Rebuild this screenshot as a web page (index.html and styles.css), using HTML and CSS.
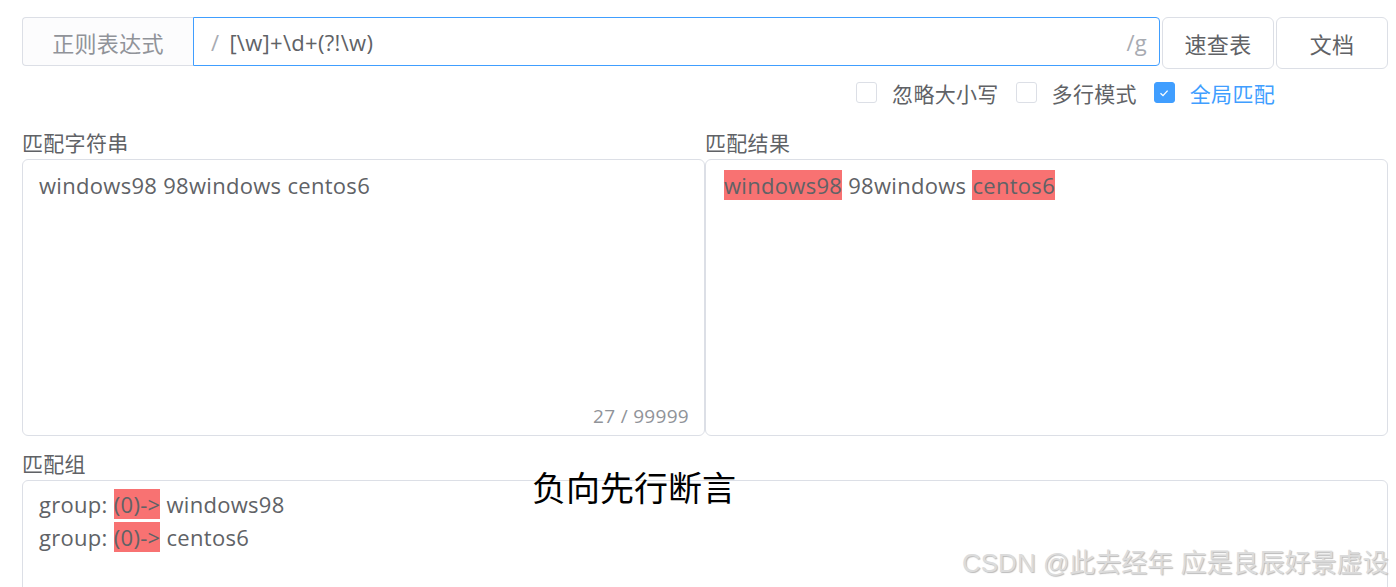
FILE: index.html
```html
<!doctype html>
<html lang="zh">
    <head>
        <meta charset="utf-8">
        <link rel="stylesheet" href="styles.css">
    </head>
    <body>
        <div class="Pagina">
            <!-- Fila de la expresión regular -->
            <div class="Fila">
                <div class="Prefijo">正则表达式</div>
                <div class="Entrada">
                    <span class="Barra">/</span>
                    <span class="Expresion">[\w]+\d+(?!\w)</span>
                    <span class="Flags">/g</span>
                </div>
                <button class="Boton">速查表</button>
                <button class="Boton">文档</button>
            </div>

            <!-- Opciones -->
            <div class="Opciones">
                <label class="Check"><span class="Caja"></span>忽略大小写</label>
                <label class="Check"><span class="Caja"></span>多行模式</label>
                <label class="Check Activo"><span class="Caja">
                    <svg width="12" height="12" viewBox="0 0 12 12"><path d="M2.5 6.2 L5 8.6 L9.6 3.6" fill="none" stroke="#fff" stroke-width="1.3"/></svg>
                </span>全局匹配</label>
            </div>

            <!-- Texto y resultado -->
            <div class="Paneles">
                <div class="Panel">
                    <div class="Titulo">匹配字符串</div>
                    <div class="Area">
                        <div>windows98 98windows centos6</div>
                        <span class="Contador">27 / 99999</span>
                    </div>
                </div>
                <div class="Panel">
                    <div class="Titulo">匹配结果</div>
                    <div class="Area Resultado">
                        <div><mark>windows98</mark> 98windows <mark>centos6</mark></div>
                    </div>
                </div>
            </div>

            <div class="Titulo Separado">匹配组</div>
            <div class="Area Grupos">
                <div>group: <mark>(0)-&gt;</mark> windows98</div>
                <div>group: <mark>(0)-&gt;</mark> centos6</div>
            </div>
        </div>

        <!-- Texto superpuesto -->
        <div class="Rotulo">负向先行断言</div>
        <div class="Marca">CSDN @此去经年 应是良辰好景虚设</div>
    </body>
</html>
```

FILE: styles.css
```css
body {
    margin:0;
    background:#FFF;
    color:#606266;
    font-family:"Open Sans", "Noto Sans CJK SC", sans-serif;
    font-size:22px;
    letter-spacing:0.3px;
    overflow:hidden;
}
.Pagina { padding:17px 8px 0 22px; }

/* Fila superior */
.Fila {
    display:flex;
    align-items:flex-start;
    gap:2px;
}
.Prefijo {
    width:170px;
    height:47px;
    border:1px solid #DCDFE6;
    border-right:none;
    border-radius:4px 0 0 4px;
    background:#FCFCFD;
    display:flex;
    align-items:center;
    justify-content:center;
    color:#909399;
    margin-right:-2px;
}
.Entrada {
    flex:1;
    height:47px;
    border:1px solid #409EFF;
    border-radius:0 4px 4px 0;
    display:flex;
    align-items:center;
    padding:0 12px 0 17px;
}
.Barra { color:#A8ABB2; margin-right:10px; }
.Expresion { flex:1; }
.Flags { color:#A8ABB2; }
.Boton {
    width:112px;
    height:52px;
    border:1px solid #DCDFE6;
    border-radius:6px;
    background:#FFF;
    color:#606266;
    font-family:inherit;
    font-size:22px;
    letter-spacing:0.3px;
}

/* Opciones */
.Opciones {
    display:flex;
    justify-content:flex-end;
    gap:17px;
    margin:10px 113px 0 0;
    height:27px;
    align-items:center;
    font-size:21px;
}
.Check { display:flex; align-items:center; gap:15px; }
.Caja {
    width:19px;
    height:19px;
    border:1px solid #DCDFE6;
    border-radius:3px;
    display:flex;
    align-items:center;
    justify-content:center;
}
.Activo { color:#409EFF; }
.Activo .Caja { background:#409EFF; border-color:#409EFF; }

/* Paneles */
.Paneles {
    display:grid;
    grid-template-columns:1fr 1fr;
    margin-top:22px;
}
.Titulo {
    height:31px;
    line-height:31px;
    font-size:21px;
    color:#606266;
}
.Separado { margin-top:13px; }
.Area {
    position:relative;
    border:1px solid #DCDFE6;
    border-radius:6px;
    padding:9px 16px;
    box-sizing:border-box;
    height:277px;
    line-height:33px;
}
.Resultado { padding-left:18px; }
.Contador {
    position:absolute;
    right:15px;
    bottom:2px;
    font-size:19px;
    color:#909399;
}
mark {
    background:#F87272;
    color:#606266;
    padding:0;
}
.Grupos { height:130px; padding-top:7px; }

/* Superpuestos */
.Rotulo {
    position:absolute;
    left:532px;
    top:462px;
    font-family:"Noto Sans CJK SC", sans-serif;
    font-size:34px;
    letter-spacing:0;
    color:#000;
}
.Marca {
    position:absolute;
    left:962px;
    top:542px;
    white-space:nowrap;
    font-family:"Liberation Sans", "Noto Sans CJK SC", sans-serif;
    font-size:26px;
    letter-spacing:0;
    color:#DCDCDC;
    text-shadow:1px 1px 1px #BBB;
}
```
